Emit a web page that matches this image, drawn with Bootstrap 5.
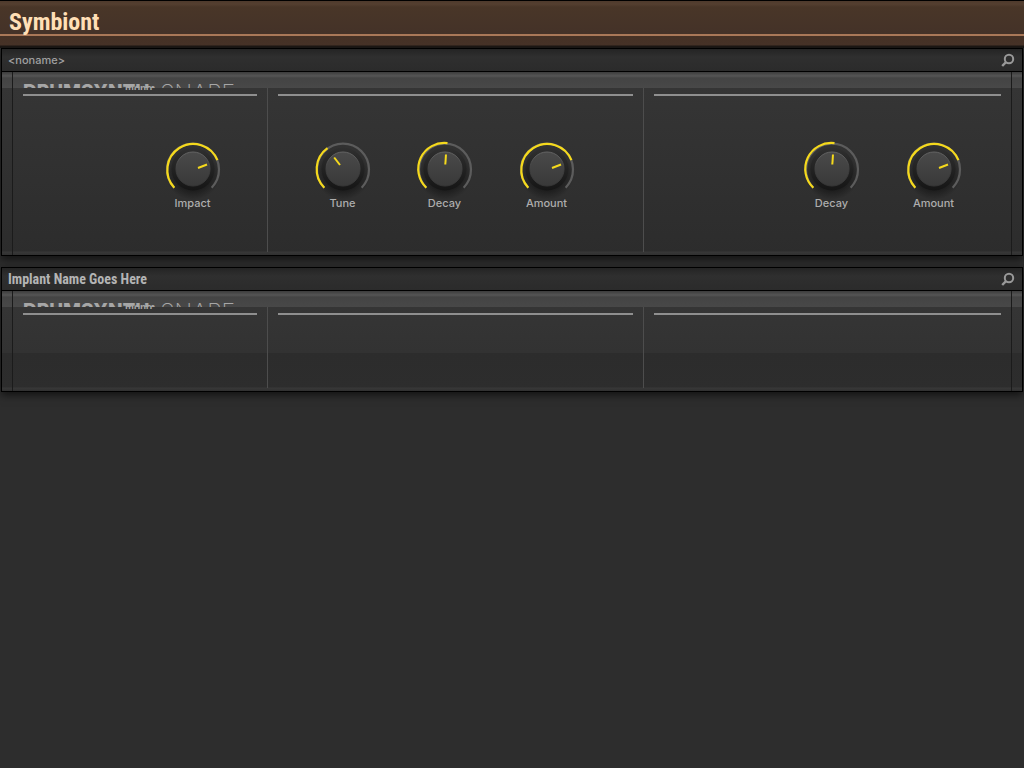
<!DOCTYPE html>
<html lang="en">
<head>
<meta charset="utf-8">
<meta name="viewport" content="width=device-width, initial-scale=1">
<title>Symbiont</title>
<link href="https://cdn.jsdelivr.net/npm/bootstrap@5.3.0/dist/css/bootstrap.min.css" rel="stylesheet">
<style>
body { background: #2d2d2d; color: #a8a8a8; font-family: "Liberation Sans", Arial, sans-serif; min-height: 100vh; }
.app-bar { height: 48px; border-top: 1px solid #000; border-bottom: 1px solid #191614; position: relative;
  background: linear-gradient(#4e3a2c 0, #543f30 3px, #493628 6px, #443228 32px, #443228 33px, #a97858 33px 35px, #453125 35px, #463227 44px, #1b1613 45px); }
.app-title { font: bold 24px/28px "Roboto Condensed", Roboto, sans-serif; color: #ffdfb6; margin: 0; padding: 7px 9px 0; }
.rack { display: flex; flex-direction: column; gap: 11px; padding: 0 1px; }
.module { border: 1px solid #000; box-shadow: 0 3px 8px rgba(0,0,0,.6); }
.module-head { height: 23px; background: linear-gradient(#242424, #2f2f2f 8px, #2b2b2b); border-bottom: 1px solid #000; padding: 0 7px 0 6px; }
.patch-name { font: 500 11px/23px Inter, sans-serif; color: #a0a0a0; }
.implant-name { font: bold 14px/23px "Roboto Condensed", Roboto, sans-serif; color: #b4b4b4; }
.find { border: 0; background: none; padding: 0; width: 14px; height: 22px; }
.find svg { display: block; }
.face { padding: 0 10px; height: 183px; position: relative;
  background: linear-gradient(#3c3c3c 0, #484848 2px, #555 4px, #444 6px, #484848 16px, transparent 16px),
    linear-gradient(transparent calc(100% - 4px), #383838 calc(100% - 3px), #303030),
    linear-gradient(#353535 16px, #2c2c2c); }
.face-short { height: 100px;
  background: linear-gradient(#3c3c3c 0, #484848 2px, #555 4px, #444 6px, #484848 16px, transparent 16px),
    linear-gradient(transparent calc(100% - 4px), #383838 calc(100% - 3px), #303030),
    linear-gradient(#353535 16px, #323232 62px, #2c2c2c 62px, #2d2d2d); }
.deck { border: solid #1b1b1b; border-width: 0 1px; height: 100%; display: grid; grid-template-columns: 254fr 376fr 368fr; }
.zone { padding: 0 10px; position: relative; min-width: 0; }
.zone + .zone { padding-left: 11px; }
.zone + .zone::before { content: ""; position: absolute; left: 0; top: 16px; bottom: 3px; width: 1px; background: #4d4d4d; }
.zone-head { height: 24px; border-bottom: 2px solid #8f8f8f; }
.brand { height: 18px; overflow: hidden; white-space: nowrap; position: relative; color: #a6a6a6; }
.brand-row { gap: 4px; align-items: flex-start; padding-top: 10px; height: 16px; overflow: hidden; }
.brand-main { font: 800 19px/20px Inter, sans-serif; }
.brand-sub { font: 200 23px/22px Inter, sans-serif; }
.brand-tag { position: absolute; left: 102px; top: 12px; font: bold 10px/10px "Liberation Sans", sans-serif; }
.knobs { padding: 43px 14px 0; gap: 1px; }
.zone-c .knobs { padding-right: 17px; }
.knob { width: 101px; position: relative; text-align: center; }
.knob svg { display: block; margin: 0 auto; overflow: visible; }
.knob label { display: block; font: 500 11px/14px Inter, sans-serif; color: #adadad; }
.knob input { position: absolute; inset: 0 20px auto; width: 61px; height: 57px; opacity: 0; cursor: pointer; }
</style>
</head>
<body>
<svg width="0" height="0" class="position-absolute" aria-hidden="true">
  <defs>
    <linearGradient id="cap" x1="0" y1="0" x2="0" y2="1"><stop offset="0" stop-color="#4a4a4a"/><stop offset="1" stop-color="#393939"/></linearGradient>
    <linearGradient id="rim" x1="0" y1="0" x2="0" y2="1"><stop offset="0" stop-color="#303030"/><stop offset="1" stop-color="#151515"/></linearGradient>
    <linearGradient id="edge" x1="0" y1="0" x2="0" y2="1"><stop offset="0" stop-color="#646464"/><stop offset=".5" stop-color="#414141"/><stop offset="1" stop-color="#343434"/></linearGradient>
    <radialGradient id="drop"><stop offset=".6" stop-color="#000" stop-opacity=".4"/><stop offset="1" stop-color="#000" stop-opacity="0"/></radialGradient>
    <g id="dial">
      <ellipse cx="30" cy="36" rx="27" ry="25" fill="url(#drop)"/>
      <path d="M11.3 48.7A26 26 0 1 1 48.7 48.7" fill="none" stroke="#5c5c5c" stroke-width="2.2"/>
      <circle cx="30" cy="30" r="21.5" fill="url(#rim)"/>
      <circle cx="30" cy="30" r="17" fill="url(#cap)" stroke="url(#edge)"/>
    </g>
    <g id="lens" fill="none" stroke="#999">
      <circle cx="8" cy="10" r="4.2" stroke-width="2"/><path d="M5 13.2L1.2 17" stroke-width="2.4"/>
    </g>
  </defs>
</svg>

<header class="app-bar"><h1 class="app-title">Symbiont</h1></header>

<main class="rack">
  <section class="module">
    <div class="module-head d-flex justify-content-between">
      <span class="patch-name">&lt;noname&gt;</span>
      <button class="find" type="button" aria-label="Search"><svg width="14" height="22"><use href="#lens"/></svg></button>
    </div>
    <div class="face">
      <div class="deck">
        <div class="zone zone-a">
          <div class="zone-head"><div class="brand"><div class="brand-row d-flex"><span class="brand-main">DRUMSYNTH:</span><span class="brand-sub">SNARE</span></div><span class="brand-tag">mono</span></div></div>
          <div class="knobs d-flex justify-content-end">
            <div class="knob"><svg width="60" height="57"><use href="#dial"/><path d="M11.3 48.7A26 26 0 1 1 54.4 21.2" fill="none" stroke="#f5d91c" stroke-width="2.2"/><path d="M35 29L44 25.5" stroke="#f5d91c" stroke-width="2"/></svg><input type="range" id="impact" value="75"><label for="impact">Impact</label></div>
          </div>
        </div>
        <div class="zone zone-b">
          <div class="zone-head"></div>
          <div class="knobs d-flex">
            <div class="knob"><svg width="60" height="57"><use href="#dial"/><path d="M11.3 48.7A26 26 0 0 1 14.5 9.2" fill="none" stroke="#f5d91c" stroke-width="2.2"/><path d="M27 26L21.2 18.5" stroke="#f5d91c" stroke-width="2"/></svg><input type="range" id="tune" value="35"><label for="tune">Tune</label></div>
            <div class="knob"><svg width="60" height="57"><use href="#dial"/><path d="M11.3 48.7A26 26 0 0 1 32.5 4.1" fill="none" stroke="#f5d91c" stroke-width="2.2"/><path d="M30.3 25.5L31 15.5" stroke="#f5d91c" stroke-width="2"/></svg><input type="range" id="decay" value="51"><label for="decay">Decay</label></div>
            <div class="knob"><svg width="60" height="57"><use href="#dial"/><path d="M11.3 48.7A26 26 0 1 1 54.4 21.2" fill="none" stroke="#f5d91c" stroke-width="2.2"/><path d="M35 29L44 25.5" stroke="#f5d91c" stroke-width="2"/></svg><input type="range" id="amount" value="75"><label for="amount">Amount</label></div>
          </div>
        </div>
        <div class="zone zone-c">
          <div class="zone-head"></div>
          <div class="knobs d-flex justify-content-end">
            <div class="knob"><svg width="60" height="57"><use href="#dial"/><path d="M11.3 48.7A26 26 0 0 1 32.5 4.1" fill="none" stroke="#f5d91c" stroke-width="2.2"/><path d="M30.3 25.5L31 15.5" stroke="#f5d91c" stroke-width="2"/></svg><input type="range" id="decay2" value="51"><label for="decay2">Decay</label></div>
            <div class="knob"><svg width="60" height="57"><use href="#dial"/><path d="M11.3 48.7A26 26 0 1 1 54.4 21.2" fill="none" stroke="#f5d91c" stroke-width="2.2"/><path d="M35 29L44 25.5" stroke="#f5d91c" stroke-width="2"/></svg><input type="range" id="amount2" value="75"><label for="amount2">Amount</label></div>
          </div>
        </div>
      </div>
    </div>
  </section>

  <section class="module">
    <div class="module-head d-flex justify-content-between">
      <span class="implant-name">Implant Name Goes Here</span>
      <button class="find" type="button" aria-label="Search"><svg width="14" height="22"><use href="#lens"/></svg></button>
    </div>
    <div class="face face-short">
      <div class="deck">
        <div class="zone zone-a"><div class="zone-head"><div class="brand"><div class="brand-row d-flex"><span class="brand-main">DRUMSYNTH:</span><span class="brand-sub">SNARE</span></div><span class="brand-tag">mono</span></div></div></div>
        <div class="zone zone-b"><div class="zone-head"></div></div>
        <div class="zone zone-c"><div class="zone-head"></div></div>
      </div>
    </div>
  </section>
</main>
<script src="https://cdn.jsdelivr.net/npm/bootstrap@5.3.0/dist/js/bootstrap.bundle.min.js"></script>
</body>
</html>
